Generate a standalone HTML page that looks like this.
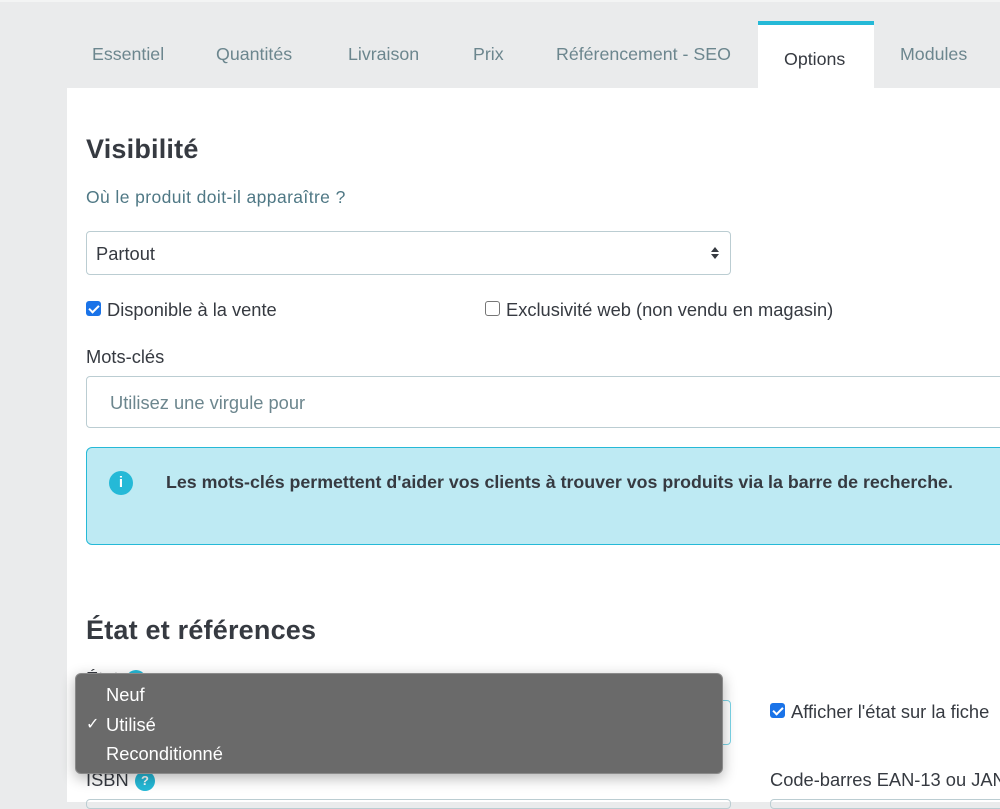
<!DOCTYPE html>
<html><head><meta charset="utf-8"><style>
*{box-sizing:border-box;margin:0;padding:0}
body{width:1000px;height:802px;overflow:hidden;background:#eaebec;font-family:"Liberation Sans",sans-serif;color:#363a41;position:relative}
.abs{position:absolute;white-space:nowrap}
.tab{position:absolute;top:44px;font-size:17.8px;color:#6c868e}
.main{position:absolute;left:67px;top:88px;right:0;bottom:0;background:#fff}
h2{position:absolute;font-size:27px;font-weight:bold;color:#363a41;white-space:nowrap;letter-spacing:0.2px}
.t{font-size:18.3px}
.cb{position:absolute;width:15px;height:15px;border-radius:3px}
.cb.on{background:#1a73e8}
.cb.on::after{content:"";position:absolute;left:5px;top:1.5px;width:4px;height:8px;border:solid #fff;border-width:0 2.2px 2.2px 0;transform:rotate(45deg)}
.cb.off{border:1px solid #767676;background:#fff}
.q{position:absolute;width:20px;height:20px;border-radius:50%;background:#25b9d7;color:#fff;font-size:13px;font-weight:bold;text-align:center;line-height:20px}
</style></head><body>
<div class="abs" style="left:0;top:0;width:1000px;height:2px;background:#f3f4f4"></div>
<div class="tab" style="left:92px">Essentiel</div>
<div class="tab" style="left:216px">Quantités</div>
<div class="tab" style="left:348px">Livraison</div>
<div class="tab" style="left:473px">Prix</div>
<div class="tab" style="left:556px">Référencement - SEO</div>
<div class="abs" style="left:758px;top:21px;width:116px;height:70px;background:#fff;border-top:4px solid #25b9d7"></div>
<div class="tab" style="left:784px;top:49px;color:#363a41">Options</div>
<div class="tab" style="left:900px">Modules</div>
<div class="main"></div>

<h2 style="left:86px;top:134px">Visibilité</h2>
<div class="abs" style="left:86px;top:187px;font-size:17.5px;letter-spacing:0.4px;color:#4f7885">Où le produit doit-il apparaître ?</div>
<div class="abs" style="left:86px;top:231px;width:645px;height:44px;border:1px solid #bbcdd2;border-radius:4px;background:#fff"></div>
<div class="abs t" style="left:96px;top:243px">Partout</div>
<svg class="abs" style="left:710px;top:246px" width="10" height="14"><path d="M1 6L5 1L9 6Z M1 8L5 13L9 8Z" fill="#363a41"/></svg>

<div class="cb on" style="left:86px;top:301px"></div>
<div class="abs t" style="left:107px;top:299px">Disponible à la vente</div>
<div class="cb off" style="left:485px;top:301px"></div>
<div class="abs t" style="left:506px;top:299px">Exclusivité web (non vendu en magasin)</div>

<div class="abs t" style="left:86px;top:346px">Mots-clés</div>
<div class="abs" style="left:86px;top:376px;width:930px;height:52px;border:1px solid #bbcdd2;border-radius:4px"></div>
<div class="abs t" style="left:110px;top:392px;color:#6c868e">Utilisez une virgule pour</div>

<div class="abs" style="left:86px;top:447px;width:930px;height:98px;background:#beeaf3;border:1px solid #25b9d7;border-radius:6px"></div>
<div class="q" style="left:109px;top:471px;width:24px;height:24px;line-height:24px;font-size:15px">i</div>
<div class="abs" style="left:166px;top:472px;font-size:17.8px;font-weight:bold">Les mots-clés permettent d'aider vos clients à trouver vos produits via la barre de recherche.</div>

<h2 style="left:86px;top:615px">État et références</h2>
<div class="abs t" style="left:86px;top:668px">État</div>
<div class="q" style="left:126px;top:670px">?</div>
<div class="abs" style="left:86px;top:700px;width:645px;height:45px;border:1px solid #7cd5e7;border-radius:4px"></div>
<div class="cb on" style="left:770px;top:703px"></div>
<div class="abs t" style="left:791px;top:701px">Afficher l'état sur la fiche</div>
<div class="abs t" style="left:86px;top:769px">ISBN</div>
<div class="q" style="left:135px;top:771px">?</div>
<div class="abs t" style="left:770px;top:769px">Code-barres EAN-13 ou JAN</div>
<div class="abs" style="left:86px;top:799px;width:645px;height:10px;border:1px solid #bbcdd2;border-radius:4px"></div>
<div class="abs" style="left:770px;top:799px;width:240px;height:10px;border:1px solid #bbcdd2;border-radius:4px"></div>

<div class="abs" style="left:75px;top:673px;width:648px;height:101px;background:#6a6a6a;border:1px solid #8a8a8a;border-radius:6px;box-shadow:0 4px 14px rgba(0,0,0,.3)"></div>
<div class="abs t" style="left:106px;top:684px;color:#fff">Neuf</div>
<div class="abs" style="left:86px;top:714px;font-size:16px;color:#fff">✓</div>
<div class="abs t" style="left:106px;top:714px;color:#fff">Utilisé</div>
<div class="abs t" style="left:106px;top:743px;color:#fff">Reconditionné</div>
</body></html>
